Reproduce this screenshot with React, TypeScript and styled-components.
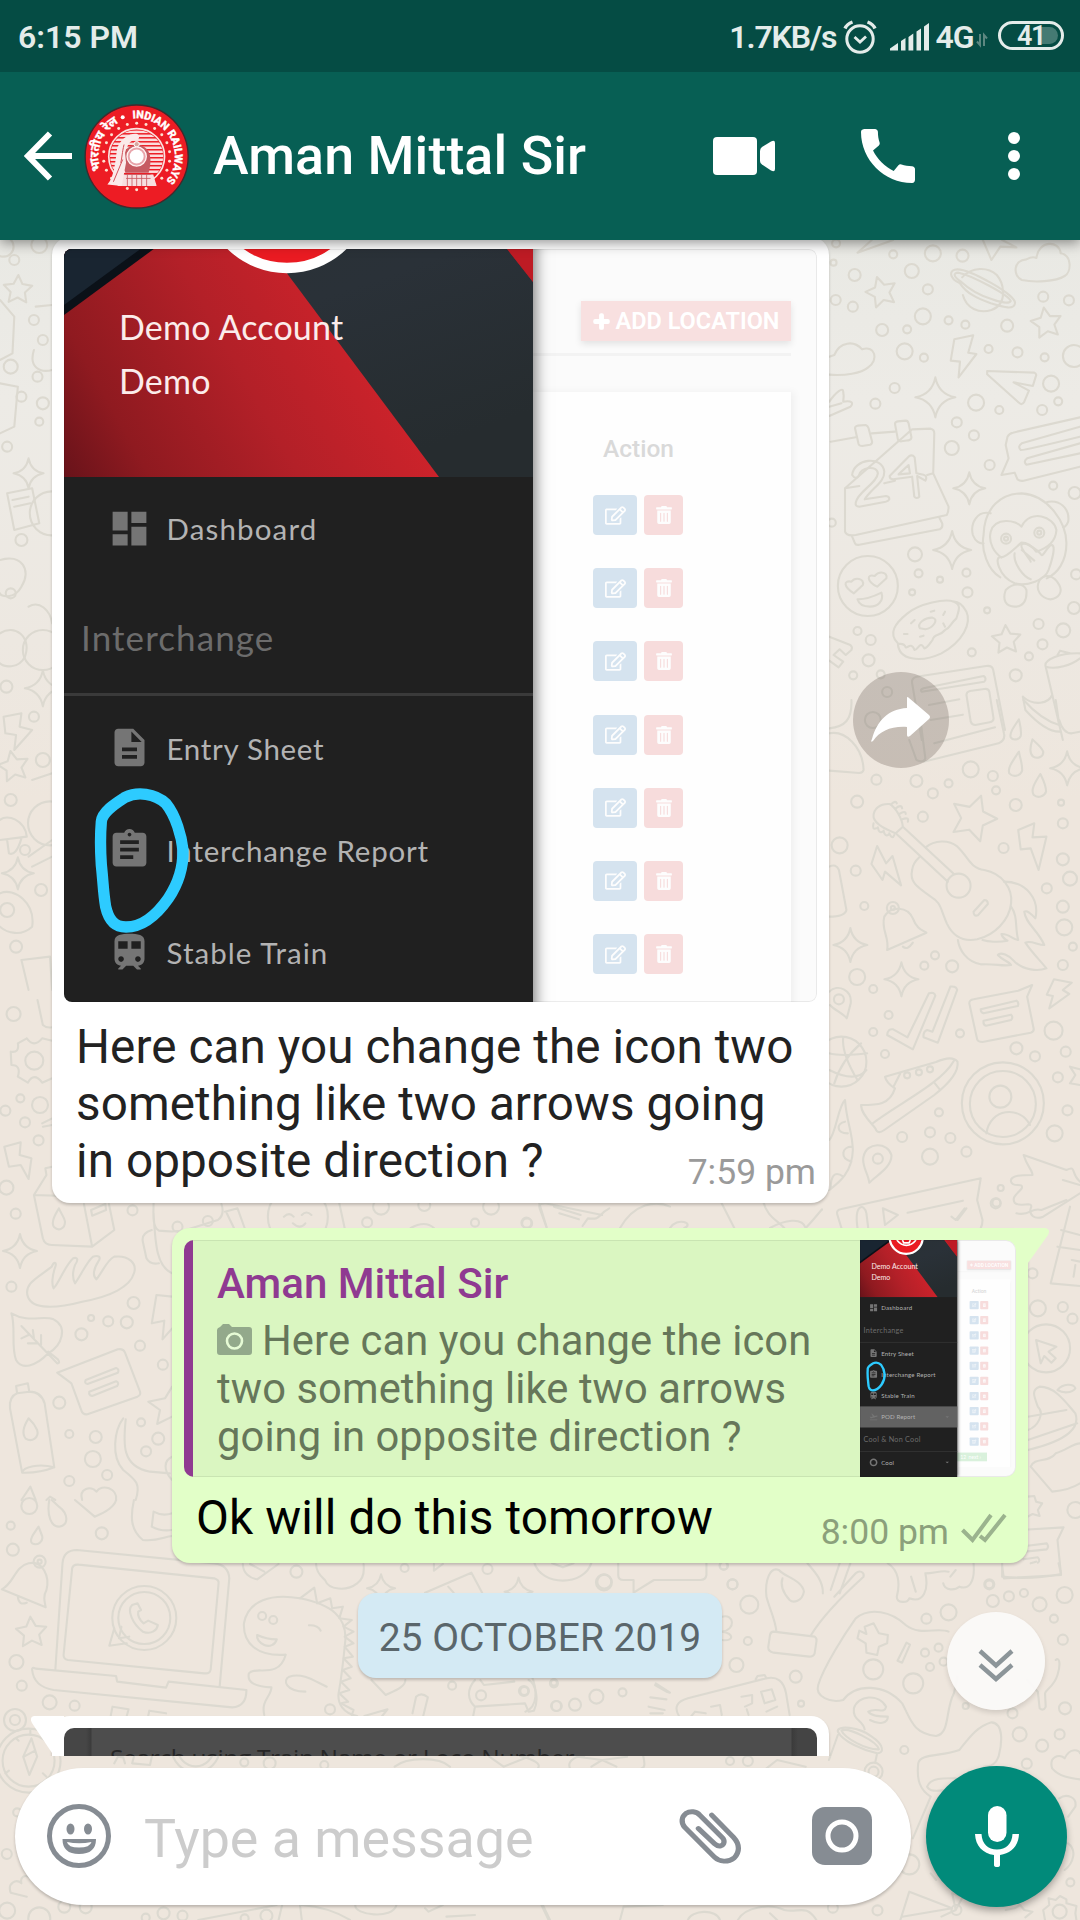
import React from "react";
import styled, { createGlobalStyle } from "styled-components";
import {
  MdArrowDropDown,
  MdAssignment,
  MdCall,
  MdDashboard,
  MdDescription,
  MdFlightTakeoff,
  MdTrain,
  MdTripOrigin,
} from "react-icons/md";
import { FaPlus, FaRegEdit, FaTrashAlt } from "react-icons/fa";

const GlobalStyle = createGlobalStyle`
  * { box-sizing: border-box; }
  body { margin: 0; background: #eee6dd; font-family: Roboto, "Liberation Sans", sans-serif; }
  svg { display: block; flex: none; }
`;

/* ---------- frame ---------- */

const Screen = styled.div`
  position: relative;
  display: flex;
  flex-direction: column;
  width: 1080px;
  height: 1920px;
  overflow: hidden;
  background: linear-gradient(#e9e9e4 240px, #edebe6 400px, #ede8e1 640px, #eee6dd 800px);
`;

const WallpaperLayer = styled.svg`
  position: absolute;
  left: 0;
  top: 0;
`;

const StatusBar = styled.div`
  position: relative;
  z-index: 3;
  flex: none;
  display: flex;
  align-items: center;
  height: 72px;
  padding: 1px 16px 0 18px;
  background: #054c44;
  color: #e4ecea;
  font-size: 32px;
  font-weight: 600;
`;

const StatusText = styled.span<{ $spacing?: number; $left?: number }>`
  margin-left: ${(p) => p.$left ?? 0}px;
  letter-spacing: ${(p) => p.$spacing ?? 0}px;
  white-space: nowrap;
`;

const StatusRight = styled.div`
  display: flex;
  align-items: center;
  margin-left: auto;
`;

const StatusGlyph = styled.svg<{ $left: number }>`
  margin-left: ${(p) => p.$left}px;
`;

const Battery = styled.div`
  display: flex;
  align-items: center;
  justify-content: center;
  position: relative;
  width: 66px;
  height: 29px;
  margin: -2px 0 0 10px;
  border: 3px solid #e4ecea;
  border-radius: 15px;
  font-size: 27px;
  letter-spacing: -1.5px;
`;

const BatteryLevel = styled.span`
  position: absolute;
  right: 3px;
  top: 3px;
  z-index: -1;
  width: 19px;
  height: 17px;
  border-radius: 0 9px 9px 0;
  background: #457a73;
`;

const AppBar = styled.header`
  position: relative;
  z-index: 2;
  flex: none;
  display: flex;
  align-items: center;
  height: 168px;
  padding-left: 24px;
  background: #075f54;
  color: #fff;
  box-shadow: 0 3px 12px rgba(0, 0, 0, 0.42);
`;

const ContactName = styled.h1`
  margin: 0 0 0 24px;
  width: 500px;
  font-size: 53.7px;
  font-weight: 500;
  letter-spacing: 0.1px;
  line-height: 62px;
  white-space: nowrap;
`;

const AvatarSvg = styled.svg`
  margin-left: 12px;
`;

const CallIcon = styled(MdCall)`
  margin-left: 76px;
`;

const DotsIcon = styled.svg`
  margin-left: 84px;
`;

/* ---------- conversation ---------- */

const Chat = styled.main`
  position: relative;
  flex: none;
  display: flex;
  flex-direction: column;
  height: 1516px;
  overflow: hidden;
`;

const Bubble = styled.section<{ $mine?: boolean; $top: number; $height: number }>`
  position: relative;
  flex: none;
  align-self: ${(p) => (p.$mine ? "flex-end" : "flex-start")};
  width: ${(p) => (p.$mine ? 856 : 777)}px;
  height: ${(p) => p.$height}px;
  margin: ${(p) => p.$top}px 52px 0;
  padding: 12px;
  border-radius: 18px;
  background: ${(p) => (p.$mine ? "#e2ffc8" : "#fff")};
  box-shadow: 0 2px 3px rgba(0, 0, 0, 0.2);
`;

const Tail = styled.svg<{ $mine?: boolean }>`
  position: absolute;
  top: 0;
  ${(p) => (p.$mine ? "right: -21px;" : "left: -21px;")}
`;

const Caption = styled.p`
  margin: 17px 0 0;
  padding-left: 12px;
  font-size: 47.6px;
  line-height: 57px;
  letter-spacing: 0.1px;
  color: #222;
  white-space: pre-line;
`;

const Stamp = styled.div`
  margin: -38px 1px 0 0;
  text-align: right;
  font-size: 35.5px;
  line-height: 40px;
  color: #9a9a9a;
`;

const Quote = styled.div`
  display: flex;
  height: 237px;
  overflow: hidden;
  border-radius: 10px;
  background: #daf6c1;
`;

const QuoteBar = styled.div`
  flex: none;
  width: 9px;
  background: #8f3a91;
`;

const QuoteBody = styled.div`
  flex: 1;
  padding: 18px 0 0 24px;
  border: solid #c9e4b2;
  border-width: 1px 0;
`;

const QuoteName = styled.div`
  font-size: 42.1px;
  line-height: 50px;
  font-weight: 500;
  color: #8f3a91;
`;

const QuoteText = styled.div`
  margin-top: 8px;
  font-size: 41.7px;
  line-height: 48px;
  color: #66775a;
  white-space: pre;
  letter-spacing: 0.1px;
`;

const InlineCamera = styled.svg`
  display: inline-block;
  margin-right: 9px;
`;

const ReplyRow = styled.div`
  display: flex;
  justify-content: space-between;
  padding: 13px 9px 0 12px;
`;

const ReplyText = styled.div`
  font-size: 47.8px;
  line-height: 57px;
  color: #000;
  letter-spacing: 0.1px;
`;

const ReplyMeta = styled.div`
  display: flex;
  gap: 12px;
  padding-top: 22px;
  font-size: 35.5px;
  line-height: 40px;
  color: #8ba07b;

  svg { margin-top: 1px; }
`;

const DatePill = styled.div`
  flex: none;
  align-self: center;
  width: 364px;
  height: 85px;
  margin-top: 30px;
  border-radius: 18px;
  background: #d4eaf4;
  color: #5a666b;
  font-size: 39px;
  line-height: 91px;
  text-align: center;
  white-space: nowrap;
  box-shadow: 0 2px 3px rgba(0, 0, 0, 0.2);
`;

const RoundButton = styled.button<{ $x: number; $y: number; $size: number; $bg: string; $raised?: boolean }>`
  position: absolute;
  left: ${(p) => p.$x}px;
  top: ${(p) => p.$y}px;
  display: flex;
  align-items: center;
  justify-content: center;
  width: ${(p) => p.$size}px;
  height: ${(p) => p.$size}px;
  padding: ${(p) => (p.$raised ? "8px 0 0" : "0")};
  border: none;
  border-radius: 50%;
  background: ${(p) => p.$bg};
  box-shadow: ${(p) => (p.$raised ? "0 3px 5px rgba(0,0,0,.12)" : "none")};
`;

const DarkPreview = styled.div`
  height: 90px;
  padding: 14px 0 0 46px;
  border-radius: 10px 10px 0 0;
  background: linear-gradient(
    90deg,
    #464646 0 22px,
    #3b3b3b 27px,
    #4d4d4d 28px 727px,
    #3b3b3b 728px,
    #444 734px
  );
  color: #262626;
  font: 24.500px/32px "Open Sans", sans-serif;
  letter-spacing: -0.35px;
`;

/* ---------- composer ---------- */

const Composer = styled.footer`
  position: relative;
  display: flex;
  align-items: center;
  gap: 15px;
  height: 164px;
  padding: 0 13px 4px 15px;
`;

const MessageBox = styled.div`
  display: flex;
  align-items: center;
  width: 896px;
  height: 137px;
  padding: 0 39px 0 31px;
  border-radius: 69px;
  background: #fff;
  box-shadow: 0 2px 3px rgba(0, 0, 0, 0.22);
`;

const Placeholder = styled.span`
  flex: 1;
  padding: 5px 0 0 32px;
  font-size: 53.8px;
  line-height: 64px;
  color: #ccc;
`;

const CameraGlyph = styled.svg`
  margin-left: 70px;
`;

const MicButton = styled.div`
  display: flex;
  align-items: center;
  justify-content: center;
  width: 141px;
  height: 141px;
  border-radius: 50%;
  background: #018a7a;
  box-shadow: 0 4px 7px rgba(0, 0, 0, 0.3);
`;

/* ---------- shared app capture ---------- */

const CaptureWindow = styled.div<{ $w: number; $h: number; $r: string }>`
  position: relative;
  flex: none;
  width: ${(p) => p.$w}px;
  height: ${(p) => p.$h}px;
  overflow: hidden;
  border-radius: ${(p) => p.$r};

  &::after {
    content: "";
    position: absolute;
    z-index: 3;
    inset: 0;
    border-radius: inherit;
    box-shadow: inset 0 0 0 1px rgba(0, 0, 0, 0.07);
  }
`;

const CapturePage = styled.div<{ $scale: number; $shift: number }>`
  position: relative;
  display: flex;
  width: 753px;
  height: 1144px;
  margin-top: ${(p) => p.$shift}px;
  transform: scale(${(p) => p.$scale});
  transform-origin: 0 0;
  background: #fbfbfb;
  font-family: Lato, "Open Sans", sans-serif;
`;

const Sidebar = styled.div`
  position: relative;
  z-index: 1;
  flex: none;
  display: flex;
  flex-direction: column;
  width: 468.5px;
  background: #202020;
  box-shadow: 2px 0 14px rgba(0, 0, 0, 0.55);
`;

const Cover = styled.div`
  position: relative;
  flex: none;
  height: 276px;
`;

const CoverArt = styled.svg`
  position: absolute;
  left: 0;
  top: 0;
`;

const CoverText = styled.div`
  position: relative;
  padding: 98.5px 0 0 55px;
  font-size: 34px;
  line-height: 54.5px;
  letter-spacing: 0.2px;
  color: #fbeceb;
`;

const MenuRow = styled.div<{ $active?: boolean; $ls?: number }>`
  flex: none;
  display: flex;
  align-items: center;
  height: 102.4px;
  padding: 0 28px 0 43px;
  gap: 14.5px;
  background: ${(p) => (p.$active ? "#626262" : "none")};
  color: #b3b3b3;
  font-size: 29.5px;
  letter-spacing: ${(p) => p.$ls ?? 0.5}px;

  svg { color: #757575; }
  span { flex: 1; padding-top: 1px; }
`;

const MenuHeading = styled.div`
  flex: none;
  height: 117px;
  padding-left: 17px;
  border-bottom: 3px solid #3a3a3a;
  font-size: 35px;
  line-height: 116px;
  letter-spacing: 1.1px;
  color: #6c6c6c;
`;

const Annotation = styled.svg`
  position: absolute;
  z-index: 2;
  left: -24px;
  top: 419px;
  overflow: visible;
`;

const Content = styled.div`
  flex: 1;
  padding: 100px 26px 0 0;
`;

const AddButton = styled.div`
  display: flex;
  align-items: center;
  justify-content: center;
  gap: 6px;
  width: 210px;
  height: 40px;
  margin-left: auto;
  background: #f8e0e0;
  color: #fff;
  font: 600 23.5px Roboto, sans-serif;
  white-space: nowrap;
  box-shadow: 0 3px 7px rgba(0, 0, 0, 0.1);

  svg { stroke: #fff; stroke-width: 50px; }
`;

const Rule = styled.div`
  height: 3px;
  margin-top: 12px;
  background: #f3f3f3;
`;

const Card = styled.div`
  height: 907px;
  margin-top: 36px;
  padding: 42px 0 0 60.5px;
  background: #fefefe;
  box-shadow: 3px 0 8px rgba(0, 0, 0, 0.05);
`;

const ColumnTitle = styled.div`
  height: 61px;
  padding-left: 10px;
  font: 500 24.5px/30px Roboto, sans-serif;
  color: #d9d9d9;
`;

const ActionRow = styled.div`
  display: flex;
  gap: 7px;
  height: 40px;
  margin-bottom: 33.2px;
`;

const ActionButton = styled.div<{ $danger?: boolean }>`
  display: flex;
  align-items: center;
  justify-content: center;
  width: ${(p) => (p.$danger ? 39 : 44)}px;
  border-radius: 4px;
  background: ${(p) => (p.$danger ? "#f7dcdc" : "#d5e3ef")};
  color: #fdfdfd;
`;

const Pager = styled.div`
  width: 145px;
  height: 42px;
  margin: 20px 0 0 -61px;
  padding-left: 16px;
  background: #d9f1dc;
  color: #fff;
  font-size: 24px;
  line-height: 42px;
`;

interface AppCaptureProps {
  scale?: number;
  shift?: number;
  rows: number;
}

function AppCapture({ scale = 1, shift = 0, rows }: AppCaptureProps) {
  const whole = rows > 7;
  return (
    <CapturePage $scale={scale} $shift={shift}>
      <Sidebar>
        <Cover>
          <CoverArt width="469" height="276" viewBox="0 -48 469 276">
            <defs>
              <linearGradient id="red" gradientUnits="userSpaceOnUse" x1="0" y1="228" x2="300" y2="60">
                <stop offset="0" stopColor="#68131a" />
                <stop offset="0.22" stopColor="#8f1a20" />
                <stop offset="0.6" stopColor="#b32028" />
                <stop offset="1" stopColor="#cf232b" />
              </linearGradient>
              <linearGradient id="slate" x1="0" y1="0" x2="0.6" y2="1">
                <stop offset="0" stopColor="#293135" />
                <stop offset="0.5" stopColor="#2a3138" />
                <stop offset="1" stopColor="#262c2f" />
              </linearGradient>
            </defs>
            <rect y="-48" width="469" height="276" fill="url(#slate)" />
            <path d="M0-48H169L375 228H0z" fill="url(#red)" />
            <path d="M0-48H155L0 66z" fill="#0b1118" />
            <path d="M0-48H142L0 56z" fill="#192531" />
            <path d="M407-48H469V33L443 0z" fill="#d42029" />
            <path d="M460-48H469V33L443 0L412-48z" fill="#a3171f" opacity=".45" />
            <circle cx="223" cy="-61" r="80" fill="#ea1b22" stroke="#fff" strokeWidth="10.5" />
            <path d="M178-48c12 16 28 26 46 26s34-10 46-26M205-48l6 14h26l6-14" stroke="#fff" strokeWidth="8" fill="none" />
          </CoverArt>
          <CoverText>
            Demo Account
            <br />
            Demo
          </CoverText>
        </Cover>
        <MenuRow $ls={1.15}><MdDashboard size={45} /><span>Dashboard</span></MenuRow>
        <MenuHeading>Interchange</MenuHeading>
        <MenuRow $ls={0.7}><MdDescription size={45} /><span>Entry Sheet</span></MenuRow>
        <MenuRow $ls={0.8}><MdAssignment size={45} /><span>Interchange Report</span></MenuRow>
        <MenuRow $ls={1.05}><MdTrain size={45} /><span>Stable Train</span></MenuRow>
        {whole && (
          <>
            <MenuRow $active><MdFlightTakeoff size={45} /><span>POD Report</span><MdArrowDropDown size={40} /></MenuRow>
            <MenuHeading>Cool &amp; Non Cool</MenuHeading>
            <MenuRow><MdTripOrigin size={45} /><span>Cool</span><MdArrowDropDown size={40} /></MenuRow>
          </>
        )}
      </Sidebar>
      <Content>
        <AddButton><FaPlus size={17} />ADD LOCATION</AddButton>
        <Rule />
        <Card>
          <ColumnTitle>Action</ColumnTitle>
          {Array.from({ length: rows }, (_, i) => (
            <ActionRow key={i}>
              <ActionButton><FaRegEdit size={21} /></ActionButton>
              <ActionButton $danger><FaTrashAlt size={18} /></ActionButton>
            </ActionRow>
          ))}
          {whole && <Pager>12&nbsp; next ›</Pager>}
        </Card>
      </Content>
      <Annotation width="520" height="400" viewBox="0 0 1560 1200">
        <path
          d="M184 605C186 575 230 548 255 532C292 514 345 520 378 551C408 588 425 650 429 690C430 745 412 795 385 835C350 885 305 921 258 921C220 921 205 895 197 860C190 820 189 780 184 735C181 690 181 640 184 605z"
          fill="none"
          stroke="#2dcbff"
          strokeWidth="34"
        />
      </Annotation>
    </CapturePage>
  );
}

/* ---------- wallpaper doodles ---------- */

type Spot = [number, number, number];

interface DoodleProps {
  x: number;
  y: number;
  rings?: Spot[];
  stars?: Spot[];
  sparks?: Spot[];
  paths?: string[];
}

const SX = 2.8;
const SY = 3;

function starPath([cx, cy, r]: Spot) {
  const tilt = ((cx * 7 + cy) % 40) / 60 - 0.3;
  const pts = Array.from({ length: 10 }, (_, i) => {
    const a = (Math.PI / 5) * i - Math.PI / 2 + tilt;
    const k = i % 2 ? r * 0.5 : r;
    return `${cx + Math.cos(a) * k * SX} ${cy + Math.sin(a) * k * SY}`;
  });
  return `M${pts.join("L")}z`;
}

function sparkPath([cx, cy, r]: Spot) {
  const w = r * SX;
  const h = r * SY;
  const a = w * 0.16;
  const b = h * 0.16;
  return `M${cx} ${cy - h}Q${cx + a} ${cy - b} ${cx + w} ${cy}Q${cx + a} ${cy + b} ${cx} ${cy + h}Q${cx - a} ${cy + b} ${cx - w} ${cy}Q${cx - a} ${cy - b} ${cx} ${cy - h}z`;
}

function Doodles({ x, y, rings = [], stars = [], sparks = [], paths = [] }: DoodleProps) {
  return (
    <g transform={`translate(${x} ${y}) scale(${1 / SX} ${1 / SY})`}>
      {rings.map(([cx, cy, r], i) => (
        <ellipse key={`r${i}`} cx={cx} cy={cy} rx={r * SX} ry={r * SY} vectorEffect="non-scaling-stroke" />
      ))}
      {[...stars.map(starPath), ...sparks.map(sparkPath), ...paths].map((d, i) => (
        <path key={`p${i}`} d={d} vectorEffect="non-scaling-stroke" />
      ))}
    </g>
  );
}

function Wallpaper() {
  return (
    <WallpaperLayer width="1080" height="1920" viewBox="0 0 1080 1920" fill="none" stroke="#dcd9d0" strokeWidth="2.1" strokeLinejoin="round" strokeLinecap="round">
      <Doodles
        x={520}
        y={240}
        rings={[
          [885, 10, 4], [1045, 43, 4], [1156, 40, 8], [1239, 47, 6], [878, 68, 3], [937, 105, 6], [1097, 93, 7],
          [1142, 148, 5], [884, 180, 5], [932, 200, 5], [1128, 229, 8], [1200, 241, 4], [1247, 254, 4], [1465, 170, 5],
          [1537, 181, 5], [1364, 257, 6], [1014, 270, 6], [1084, 268, 4], [1077, 334, 8], [1131, 353, 4], [1312, 327, 4],
          [1393, 337, 5], [1469, 352, 4], [1551, 348, 11], [1487, 431, 8], [1049, 444, 5], [995, 491, 5], [1277, 488, 8],
          [1342, 510, 4], [1462, 510, 5], [1507, 484, 4], [1223, 547, 5], [1271, 586, 5], [1209, 624, 7], [1315, 675, 5],
          [1493, 737, 4], [1553, 759, 6], [873, 848, 4], [1106, 943, 7], [1116, 1000, 4], [1176, 1019, 3], [1250, 998, 4],
          [1253, 1057, 5], [1098, 1057, 3], [1308, 1111, 3], [1551, 1104, 6], [1557, 1003, 5], [945, 1173, 4],
          [982, 1200, 5], [1452, 1152, 5], [1521, 1171, 7], [1463, 1213, 5], [1265, 1237, 4], [1425, 1249, 4],
          [976, 1261, 6], [933, 1306, 4], [1010, 1303, 4], [1388, 1306, 6], [1028, 1356, 5],
          [974, 1038, 30], [1361, 896, 5], [1454, 878, 5], [1361, 896, 2], [1454, 878, 2],
        ]}
        stars={[[1012, 157, 16], [1474, 250, 16], [1362, 1200, 15]]}
        sparks={[[1163, 472, 20], [1258, 745, 16], [1210, 930, 19]]}
        paths={[
          "M945 38L985 0M945 38L1045 0M1296 0L1320 60L1345 20L1390 22L1350 0",
          "M1240 165C1250 205 1285 222 1320 210C1345 200 1355 180 1352 150M1238 112C1265 80 1310 80 1335 105C1345 118 1352 135 1352 152",
          "M1232 130C1200 115 1200 88 1225 88C1260 88 1390 165 1386 190C1382 212 1350 200 1318 190C1280 175 1250 160 1232 130zM1235 125C1215 112 1210 98 1228 98C1262 105 1370 165 1374 183C1370 192 1345 187 1320 177C1285 165 1255 145 1235 125z",
          "M1405 120C1380 108 1380 60 1418 58C1428 52 1438 50 1446 54C1452 0 1510 0 1514 40C1545 45 1545 95 1525 108C1500 125 1440 128 1405 120z",
          "M866 404C910 408 955 400 975 382C1005 360 995 315 958 328C935 300 895 305 880 345L866 350",
          "M1216 298L1269 286L1255 338L1278 342L1228 412L1232 365L1206 362z",
          "M1308 393L1440 398Q1448 402 1444 410L1436 438L1382 427L1425 452L1412 485Q1405 498 1397 488L1308 403z",
          "M866 485C885 455 905 440 905 455C908 470 905 480 905 485C930 480 935 490 925 500L866 528M866 500L900 490",
          "M870 605L940 592M985 580L1050 575M1098 568L1150 566Q1160 568 1160 580L1157 700L1200 800Q1200 815 1195 825L940 885Q915 890 910 875L910 745zM910 745L950 738M1020 730L1050 722M1140 705L1157 700M930 890L938 910Q940 916 950 914L1175 868Q1185 862 1182 850L1175 835",
          "M938 565Q938 558 945 557L968 555Q974 557 976 565L986 605Q986 612 980 614L958 618Q950 618 948 612zM1050 552Q1050 545 1058 544L1080 542Q1086 542 1088 550L1096 592Q1096 600 1088 601L1068 604Q1060 604 1058 598z",
          "M930 705C935 655 1015 645 1020 695C1022 725 985 745 965 778L1025 768Q1035 770 1034 778Q1032 783 1024 785L950 800Q938 800 940 788C945 755 1000 730 1002 700C1000 675 955 680 948 708Q940 720 930 705z",
          "M1088 650L1035 708Q1035 718 1045 718L1098 710L1104 770Q1110 778 1118 770L1112 708L1135 722Q1142 708 1130 704L1110 700L1105 652Q1098 642 1088 650zM1088 675L1092 700L1060 703z",
          "M1365 590Q1370 580 1380 578L1568 532M1365 590L1360 615L1368 655L1348 705L1385 698L1393 718Q1400 724 1410 722L1568 680M1568 560L1405 610Q1392 620 1402 630Q1408 632 1568 590M1568 610L1420 655Q1408 665 1418 674L1568 640",
          "M1345 1012C1310 990 1290 930 1298 885C1300 800 1350 760 1405 760C1480 765 1530 850 1530 910C1530 965 1505 1000 1475 1015M1318 820C1280 810 1260 850 1268 885C1275 905 1288 912 1298 910M1470 788C1510 775 1540 805 1535 845C1530 860 1520 865 1520 860",
          "M1404 860C1390 840 1330 830 1318 875C1310 910 1330 940 1348 952C1365 950 1380 930 1404 908C1420 908 1435 920 1445 935C1475 925 1500 905 1502 870C1495 830 1430 805 1404 860z",
          "M1348 952C1325 945 1340 1010 1385 1030C1420 1040 1470 1020 1480 990C1490 960 1500 920 1490 915C1480 912 1465 950 1460 945C1450 930 1410 900 1404 915C1400 925 1430 960 1430 965M1385 940C1380 970 1410 1010 1430 1018M1405 930L1440 962",
          "M1360 1050C1350 1080 1360 1100 1385 1100C1410 1100 1420 1080 1418 1050C1410 1028 1380 1028 1360 1050zM1455 1020C1440 1050 1460 1075 1485 1078C1510 1075 1520 1055 1510 1035C1495 1005 1470 1000 1455 1020z",
          "M935 1060C905 1040 905 1020 928 1025C938 1010 965 1015 960 1035zM1000 1040C970 1025 970 1000 993 1008C1005 992 1030 995 1026 1015zM945 1078C970 1078 990 1070 1012 1058C1020 1085 1000 1100 980 1100C960 1100 948 1090 945 1078z",
          "M1058 1210C1030 1180 1050 1150 1085 1120C1120 1090 1190 1075 1215 1085C1240 1095 1225 1120 1222 1135C1205 1150 1205 1165 1190 1170C1175 1190 1160 1180 1155 1200C1145 1215 1140 1225 1132 1225C1120 1200 1115 1230 1105 1230C1095 1205 1085 1225 1080 1222C1075 1205 1060 1215 1058 1210zM1058 1210C1060 1260 1120 1270 1180 1240C1240 1205 1265 1150 1250 1115C1240 1095 1230 1085 1215 1085",
          "M1120 1165C1110 1150 1135 1132 1155 1133C1175 1138 1155 1165 1135 1168zM1095 1150L1105 1140M1150 1115L1160 1112M1190 1115L1185 1125M1185 1150L1190 1160M1075 1182L1085 1182M1120 1190L1130 1187",
          "M866 1190L925 1215Q932 1222 928 1230L912 1245L895 1228L878 1245L905 1265L892 1282L866 1262",
          "M1098 1330Q1095 1315 1110 1310L1305 1278Q1322 1275 1325 1290L1358 1470M1098 1330L1125 1500M1125 1355L1300 1325Q1308 1315 1298 1308L1130 1345Q1118 1350 1125 1355zM1145 1395L1230 1378M1150 1440L1240 1424M1250 1365Q1250 1355 1260 1353L1300 1347Q1312 1345 1314 1355L1326 1435Q1326 1445 1315 1447L1275 1455Q1265 1455 1262 1445z",
          "M1408 1370C1440 1400 1480 1390 1490 1365M1408 1370L1415 1410Q1470 1475 1510 1475M1472 1280L1520 1500M1472 1280C1465 1260 1510 1238 1568 1240M1472 1280C1500 1290 1545 1275 1568 1255M1505 1245L1512 1232L1540 1240",
        ]}
      />
      <Doodles
        x={520}
        y={700}
        rings={[
          [998, 239, 5], [1110, 243, 6], [1200, 250, 4], [1156, 280, 5], [1262, 208, 8], [1324, 228, 5], [1333, 271, 4],
          [944, 305, 6], [1128, 350, 5], [1388, 315, 6], [1515, 308, 3], [1520, 370, 5], [895, 436, 8], [1354, 444, 5],
          [1520, 478, 6], [940, 512, 5], [1540, 536, 7], [1475, 565, 5], [1520, 620, 6], [964, 618, 4], [1524, 682, 8],
          [1548, 740, 4], [1162, 766, 4], [1132, 797, 4], [1210, 799, 6], [1520, 795, 5], [944, 831, 8], [989, 867, 4],
          [1032, 945, 4], [989, 996, 4], [1232, 1000, 4], [1494, 992, 9], [1390, 1045, 6], [1442, 1069, 5],
          [1528, 1055, 5], [1022, 1062, 4], [1506, 1132, 5], [1173, 1237, 4], [1533, 1231, 5], [1148, 1297, 5],
          [1070, 1311, 5], [1205, 1314, 5], [1250, 1355, 5], [1148, 1370, 8], [1497, 1300, 8], [1346, 1464, 3],
          [1334, 1508, 4], [893, 898, 5], [1002, 1376, 5], [1352, 1210, 41], [1352, 1212, 33], [1345, 1190, 11],
          [1228, 557, 12], [1044, 624, 6], [1044, 624, 2], [1084, 1126, 3], [1117, 1117, 3], [1148, 1108, 3],
          [900, 1085, 25], [988, 60, 8],
        ]}
        stars={[[1269, 355, 24]]}
        sparks={[[925, 735, 17], [1068, 838, 17], [1532, 205, 17]]}
        paths={[
          "M1397 58C1380 85 1370 100 1374 112C1380 122 1398 120 1402 108C1405 90 1400 75 1397 58zM1397 155C1375 190 1365 205 1370 220C1380 232 1400 230 1406 212C1407 190 1400 175 1397 155zM1435 118C1428 140 1425 160 1437 170C1450 178 1466 170 1465 155C1460 140 1445 130 1435 118zM1457 222C1440 250 1430 270 1438 284C1450 296 1468 290 1473 275C1473 255 1465 240 1457 222z",
          "M866 100C910 90 960 140 962 210Q960 218 950 219L866 212M866 85C910 80 930 60 928 0M866 500Q885 490 893 510L914 630Q910 650 866 650",
          "M1160 130L1330 82M1130 185L1340 130Q1360 120 1355 100L1335 0M1090 120L1110 180Q1130 190 1135 175L1120 50M1410 0Q1460 60 1510 75L1500 0M1510 60Q1520 100 1545 100L1568 95",
          "M990 352C988 325 1010 310 1035 312C1050 320 1070 355 1072 380L1052 400C1030 390 995 375 990 352zM1072 380L1215 522M1052 400L1198 545",
          "M1040 312Q1052 300 1055 310M1052 325Q1068 312 1070 325M1062 342Q1080 330 1080 342M1070 358Q1090 350 1086 365M990 370Q985 390 998 385M1002 382Q1005 402 1016 395M1018 392Q1022 412 1032 404M1034 400Q1042 420 1048 405",
          "M1136 442C1160 420 1200 418 1225 440C1255 470 1260 505 1300 510C1350 520 1380 565 1375 610C1370 660 1330 705 1280 718C1245 725 1215 715 1195 670C1175 620 1180 610 1150 590C1110 560 1090 545 1098 510C1100 490 1110 480 1118 472",
          "M1270 635L1300 600Q1310 600 1310 612L1282 646Q1270 650 1270 635zM1355 545C1420 545 1455 600 1443 655C1430 640 1420 630 1412 635C1415 670 1450 690 1468 735C1450 735 1430 720 1415 728C1435 760 1455 780 1474 805C1450 815 1410 810 1385 785C1370 765 1345 755 1338 765C1350 780 1370 785 1375 795C1350 800 1330 790 1290 793C1250 785 1230 750 1226 720M1375 620C1395 650 1385 680 1395 720C1380 720 1370 700 1348 702C1350 715 1360 718 1365 722C1340 728 1310 725 1295 720",
          "M1000 438L1025 490L1043 468L1067 556L1022 515L1015 540L984 492zM1395 390L1440 370L1435 412L1474 410L1452 510L1430 445L1402 448zM1495 838L1545 848L1520 870L1538 882L1482 925L1492 888L1475 884z",
          "M1028 750C1035 710 1010 690 1020 650C1040 615 1085 620 1100 655C1110 685 1125 690 1138 698zM1072 740Q1085 752 1100 728",
          "M866 875C890 850 930 870 926 910L915 955C905 940 880 930 868 915M865 1060Q900 1070 972 1060M880 1150Q900 1080 955 1030M866 1110Q940 1150 970 1110M905 1012Q900 1060 945 1140",
          "M1145 880Q1160 875 1163 887L1100 1048L1028 1005Q1030 985 1045 988L1085 1012zM1205 860Q1222 858 1224 870L1170 1028L1130 1012Q1128 995 1140 990L1155 995zM1258 910Q1258 900 1270 898L1395 872L1434 855L1420 890L1438 985Q1440 995 1430 998L1295 1026Q1282 1026 1280 1018zM1290 928L1390 902Q1398 908 1394 918L1298 940Q1290 938 1290 928zM1298 962L1375 944Q1382 952 1375 960L1305 977Q1296 975 1298 962z",
          "M1022 1130L1165 1086Q1210 1065 1225 1085C1230 1120 1190 1160 1160 1185L1020 1290Q1000 1305 995 1285C980 1265 955 1240 955 1215C1000 1215 1035 1215 1050 1165C1035 1155 1025 1145 1022 1130zM985 1272C1060 1210 1180 1150 1215 1082M1045 1162L1065 1120M1160 1148L1175 1168",
          "M1306 1300C1315 1225 1400 1215 1428 1275M978 1448C975 1420 955 1395 962 1370C970 1325 1030 1325 1040 1365C1042 1400 1000 1425 978 1448z",
          "M910 1200C915 1270 930 1290 932 1350C930 1420 890 1450 866 1470M910 1200C890 1220 885 1300 866 1320M910 1265C885 1270 885 1300 918 1300M930 1340C900 1340 895 1375 928 1385M905 1430C880 1410 870 1430 870 1465",
          "M1568 1445C1540 1420 1560 1395 1530 1410L1410 1365C1420 1400 1435 1410 1435 1425C1410 1425 1370 1425 1375 1445C1380 1465 1410 1445 1405 1465C1395 1480 1375 1490 1385 1508C1400 1525 1440 1500 1430 1525C1425 1545 1440 1560 1465 1550L1568 1480M1520 1440L1568 1455",
          "M1540 1100L1568 1108M1540 1100L1555 1125L1540 1150L1568 1155",
        ]}
      />
      <Doodles
        x={520}
        y={1200}
        rings={[
          [20, 70, 5], [1332, 10, 5], [1435, 220, 5], [1450, 325, 8], [1520, 321, 5], [1547, 356, 5], [1473, 445, 24],
          [1555, 930, 8], [570, 1097, 4], [595, 1153, 5], [236, 1145, 7], [1314, 1153, 4],
        ]}
        paths={[
          "M55 25Q50 10 70 10L230 45M55 25L75 84M95 20L170 45M110 40L165 58M250 25C215 45 230 60 190 55L175 78",
          "M280 84C320 10 380 0 420 20M420 84C440 50 490 70 460 84M700 84C740 60 790 50 800 84M560 0L600 84M680 0C690 50 720 60 740 84M800 84C830 50 850 20 845 30",
          "M888 42Q885 30 900 27L1290 -65L1280 0L1295 60Q1295 75 1290 84M888 42L900 84M945 84C935 10 965 10 970 40L975 84M1016 25L1058 45L1022 75zM1085 38L1240 2M1208 50L1220 60L1245 25M1225 60L1250 25",
          "M1390 40C1430 50 1430 20 1460 30L1530 0M1540 20L1525 84L1486 250L1568 258M1515 90L1568 105M1505 140L1568 150M1545 180L1568 185M1550 230L1555 195",
          "M1445 420L1502 440L1480 455L1500 475L1488 488L1468 468L1458 490zM1505 570C1520 550 1550 550 1555 565C1545 580 1520 580 1505 570z",
          "M1422 690C1450 680 1470 640 1450 620C1440 590 1430 570 1455 560C1500 560 1530 610 1555 640C1568 680 1540 720 1422 750M1422 650L1530 630M1422 720L1560 670M1430 800C1440 770 1480 790 1500 760C1530 750 1550 730 1568 730M1430 800L1490 875Q1540 870 1568 850",
          "M1422 890L1440 888L1445 905L1462 910L1450 930L1455 948L1435 942L1422 950M1400 990L1522 982L1505 1020L1515 1125L1355 1135L1350 1100M1415 1038L1475 1030Q1482 1040 1475 1048L1415 1055M1410 1078L1450 1072Q1458 1082 1450 1088",
          "M40 1088C60 1160 180 1160 200 1088M90 1090L120 1102L150 1090M275 1088L275 1125Q275 1140 290 1140L318 1140L318 1178L375 1140L505 1140Q520 1140 522 1125L522 1088",
        ]}
      />
      <Doodles
        x={0}
        y={1000}
        rings={[
          [38, 42, 7], [96, 182, 9], [57, 295, 4], [112, 315, 8], [15, 332, 5], [70, 367, 5], [108, 421, 5],
          [18, 563, 7], [44, 641, 5], [371, 631, 5], [497, 680, 5], [582, 663, 5], [1028, 667, 5], [1067, 620, 8],
          [1188, 615, 6], [1375, 620, 8], [1330, 668, 4], [1474, 668, 5], [32, 860, 5], [374, 909, 6], [255, 954, 3],
          [303, 964, 5], [355, 967, 6], [228, 1003, 6], [392, 1037, 5], [456, 1094, 5], [166, 1208, 6], [194, 1302, 4],
          [268, 1311, 6], [395, 1267, 4], [443, 1316, 6], [409, 1354, 5], [260, 1377, 8], [300, 1425, 5], [194, 1443, 5],
          [834, 650, 30],
        ]}
        sparks={[[56, 753, 17]]}
        paths={[
          "M105 0L120 75Q130 85 146 82M75 115Q95 145 118 115L146 122M75 115L50 130Q55 160 30 155L32 195Q60 195 50 230L78 248Q95 215 118 248L146 235",
          "M12 440L58 427L55 465L88 475L80 537L58 495L25 500zM118 370L146 355M120 380L146 375M127 505L146 500M127 505L130 525L95 585L120 715Q125 735 145 735L258 740L320 690L305 612M95 585L235 590M235 612L258 740M165 625C150 650 142 670 152 682C165 695 182 685 182 665C180 650 170 640 165 625zM255 630L295 612L297 630L258 647z",
          "M430 610C430 640 425 680 445 692C470 695 500 695 520 690L610 660Q630 645 620 612M425 690Q395 700 400 725L410 775Q420 795 445 790M430 640C435 740 440 800 482 820M630 635L665 625L685 684M635 640L655 684M795 650Q810 635 822 650M845 645Q858 630 872 645M820 670Q840 690 855 670M950 610L965 684M1150 684Q1190 660 1215 684M1510 610L1530 680",
          "M78 890C65 850 110 830 145 800C150 785 160 785 155 800C145 830 145 855 150 865C165 850 180 800 205 775C218 770 220 780 210 795C200 825 205 840 210 850C230 820 240 790 260 770C275 765 285 770 275 785C260 810 260 830 270 838C290 810 300 780 320 770C360 765 385 790 375 820C365 860 310 890 230 905C160 925 90 930 78 890z",
          "M32 940C80 970 120 945 150 958C190 980 175 1035 135 1060C100 1100 60 1110 45 1080C30 1040 45 980 32 940zM60 978L160 1090Q170 1090 162 1078L135 1055M95 1015L92 990M80 1005L60 1015M115 1035L115 1005M105 1030L78 1030",
          "M160 1118L330 1048Q345 1045 350 1058L392 1175Q395 1185 385 1190L245 1243Q232 1245 228 1232L200 1150zM240 1140L325 1104Q335 1108 330 1118L245 1152Q235 1150 240 1140zM250 1175L325 1144Q335 1148 328 1158L258 1188Q248 1186 250 1175z",
          "M48 1180L45 1158L78 1150L82 1175M48 1180Q25 1190 28 1225L62 1418Q110 1420 152 1402L125 1210Q115 1175 82 1175zM62 1418C65 1400 110 1390 152 1402M80 1255C68 1275 60 1300 72 1316C90 1328 110 1312 104 1290C98 1275 90 1265 80 1255z",
          "M482 890L438 885L425 970L460 962L455 1018L482 985M482 1160L462 1195L415 1205L448 1230L440 1272L482 1250M345 1255C320 1290 310 1370 345 1410C380 1440 395 1450 380 1500M352 1258C345 1330 340 1400 420 1415L475 1420M482 1370C460 1380 455 1410 482 1440",
          "M60 1500L85 1460L100 1500M130 1500L140 1490L155 1500M230 1500C220 1465 255 1455 270 1475C285 1450 330 1465 325 1500",
        ]}
      />
      <Doodles
        x={0}
        y={1500}
        rings={[
          [82, 18, 8], [30, 77, 4], [285, 100, 6], [36, 149, 6], [111, 185, 6], [111, 185, 2], [830, 215, 6],
          [46, 486, 7], [61, 557, 5], [139, 607, 7], [209, 617, 5], [924, 628, 5], [1133, 204, 4], [1365, 207, 5],
          [1266, 557, 4], [1347, 586, 5], [1467, 573, 5], [1551, 548, 3], [1557, 618, 5], [734, 348, 4], [765, 360, 4],
          [404, 354, 32], [404, 354, 26], [42, 660, 11], [42, 660, 5], [80, 782, 32], [80, 782, 26], [684, 787, 4],
          [908, 795, 4], [755, 790, 6], [19, 1062, 5], [48, 937, 4], [180, 1220, 6], [240, 1222, 6], [408, 1253, 4],
          [458, 1240, 6], [511, 1247, 5], [685, 1255, 4], [746, 1247, 6], [20, 1232, 8], [110, 1255, 11],
          [548, 745, 24], [548, 745, 18],
        ]}
        stars={[[88, 398, 16]]}
        sparks={[[1067, 265, 14], [1452, 275, 14]]}
        paths={[
          "M138 0C130 50 145 80 165 80C195 75 190 40 165 20L145 0M108 80C95 100 80 120 90 130C105 138 122 125 118 108zM210 0L265 50C300 35 320 20 325 0",
          "M375 0C365 50 365 90 400 120C440 125 460 110 482 108M425 80L430 35Q455 50 482 40M425 80Q450 95 482 90",
          "M5 268C40 250 40 200 80 190C120 180 140 230 130 270C120 290 125 305 128 322zM50 290Q52 318 75 308",
          "M155 508L175 190Q178 150 215 150L600 190Q640 195 642 235L615 560M178 465L202 205Q205 192 220 194L600 235Q614 240 612 250L590 508Q588 522 572 520L190 480Q178 478 178 465zM90 510Q88 500 100 506L325 528L328 545L465 563L472 545L690 570Q690 620 650 622L150 570Q95 560 90 510z",
          "M320 385L306 437L355 430M340 380L333 415L362 410M370 315C355 330 370 370 400 395C425 405 440 390 442 375L415 362L402 370C390 360 385 345 387 335L395 330L385 310z",
          "M740 645C730 600 760 590 760 562C720 560 690 550 697 520C715 495 780 540 800 464C720 470 680 430 683 370C695 300 760 280 840 295C930 315 970 350 967 420C960 500 955 540 948 580C945 610 960 640 1000 648",
          "M720 405C740 415 755 418 775 418C770 435 755 442 740 435C725 428 718 415 720 405zM865 376Q890 375 898 392M855 575C800 575 790 540 810 530C850 515 890 550 915 560M840 295L880 263L888 310L925 295L930 325L960 320L950 355L985 360L962 380L990 395L965 410L990 430L965 440L988 470L962 475L985 500L960 510L982 535L955 545L978 570L950 580L975 605L955 610L990 630L985 645M1020 648L1085 628L1070 648",
          "M680 192C680 220 700 235 720 238L780 192M700 192L740 215M885 192C885 220 905 235 910 240C920 270 970 275 1000 250C1020 235 1020 210 1018 192M1215 192V212L1240 192M1190 278L1320 218L1350 278M1255 260L1270 278",
          "M1040 540L1080 585C1110 570 1135 560 1135 540M1330 540C1305 570 1310 600 1330 620L1325 648M1330 620L1470 610L1480 635L1495 632C1510 600 1500 550 1480 540M1345 540L1355 555L1440 545M1155 640L1165 590Q1180 575 1198 592L1185 648",
          "M310 648L315 620L360 628L355 648M415 648L418 632L465 640M320 790L330 770L345 772L350 790M375 770L370 790L420 795L425 770M88 715L65 770L82 825L104 770zM67 770L98 752M1105 800C1140 770 1230 770 1260 800M1370 770L1410 800L1480 770M15 820L25 812M85 692V705M45 715L52 722M120 820L130 830",
          "M75 1190L30 1178C20 1150 45 1135 60 1150C55 1130 70 1125 80 1130M555 1260L775 1215M790 1215L780 1260M840 1215L845 1260M845 1215C900 1220 950 1240 980 1260M995 1215C990 1245 1100 1260 1110 1215M1190 1225L1200 1235L1240 1215M1250 1250L1330 1245M1520 1215L1540 1260",
        ]}
      />
      <Doodles
        x={520}
        y={1560}
        rings={[
          [235, 67, 8], [571, 17, 4], [595, 73, 5], [642, 134, 9], [638, 243, 4], [606, 315, 7], [772, 350, 6],
          [787, 431, 3], [214, 410, 7], [154, 434, 6], [103, 438, 5], [287, 397, 4], [95, 370, 4], [12, 393, 4],
          [1314, 73, 5], [1324, 123, 6], [1369, 109, 5], [1411, 99, 4], [1455, 133, 7], [1525, 105, 8], [1200, 157, 8],
          [1138, 176, 5], [1495, 176, 4], [1520, 239, 5], [1526, 445, 6], [1379, 460, 5], [1399, 523, 7], [1462, 557, 6],
          [1511, 523, 5], [1076, 570, 4], [1248, 438, 3], [1419, 611, 5], [989, 328, 10], [1101, 370, 10],
          [1134, 278, 4], [1172, 263, 4], [1148, 321, 4], [1186, 305, 4], [588, 603, 4], [638, 603, 5], [990, 635, 9],
          [990, 635, 5], [1090, 913, 10], [1541, 967, 4], [1001, 1051, 5], [876, 1043, 5], [1511, 1055, 7],
          [1222, 1050, 5],
        ]}
        paths={[
          "M690 110C685 60 700 20 725 30C740 50 790 60 795 95C790 125 765 130 755 120C730 90 730 70 735 55M690 110C700 150 715 180 718 215M815 225C840 180 880 130 962 50C965 35 950 30 940 40L880 110M848 100C850 60 820 30 805 10M870 90L895 10M895 100L925 10M710 215L825 230Q832 235 830 245L825 280Q822 290 810 290L710 278Q695 275 695 262L700 225Q702 215 710 215z",
          "M1030 10C1060 30 1065 70 1055 110C1055 130 1085 130 1090 115C1130 130 1145 90 1135 40C1160 40 1180 30 1200 35M1095 50L1108 95M1185 70C1190 95 1220 90 1230 80C1255 90 1275 70 1270 10M1205 50L1220 30M1350 10L1350 50Q1430 60 1515 42L1508 10M1430 10L1445 5",
          "M835 375C850 320 910 220 940 175C980 140 1040 155 1080 195C1120 230 1170 200 1200 215M835 375C825 410 870 430 905 420C940 370 1020 370 1070 430C1095 480 1100 520 1165 528C1205 520 1190 450 1215 400L1225 350",
          "M965 200L990 190L1005 220L1030 225L1028 250L1005 260L1000 285L970 278L968 250L945 235L950 212L970 222zM1082 248L1092 254L1070 308L1057 302z",
          "M445 468C430 440 440 425 470 415L690 355Q735 345 745 400L755 465M660 358L665 348L685 345L690 355M480 468L490 455L520 460M535 440L560 435L565 465M620 410L650 405L650 430L630 440M640 465L635 448M675 395L705 388L715 420L685 430zM690 455L720 440",
          "M380 370L420 398L410 395L378 375M365 412L410 418M360 440L405 450M365 460L400 460M566 170C600 160 605 210 566 215C600 220 600 245 566 240M30 340C50 390 50 440 15 455",
          "M965 508C960 480 930 480 935 445C945 405 1005 400 1025 440C1020 465 1000 440 975 455C985 470 1010 470 1030 470C1030 490 1005 495 980 480M890 515C885 495 950 500 985 530C1020 555 1020 580 1000 580C960 570 905 545 890 515zM900 512C920 500 1000 545 1005 568C970 570 910 535 900 512zM890 525L865 600M1000 580L995 605",
          "M1115 610C1120 580 1180 590 1230 570C1260 530 1280 500 1320 487C1355 490 1350 550 1340 590C1330 620 1310 620 1300 620M1115 610C1110 660 1120 690 1150 710L1100 835M1140 680C1150 650 1200 655 1220 655M1140 680C1150 700 1180 690 1200 690",
          "M1500 300C1510 290 1515 310 1505 345C1495 380 1475 385 1470 400L1472 440Q1465 455 1455 445L1450 395C1440 385 1430 370 1420 360M1490 625C1480 590 1510 580 1525 595C1540 560 1568 570 1568 580M1490 625C1510 650 1540 655 1568 658M1510 715C1530 700 1560 710 1555 740L1535 770M1535 850C1560 870 1550 910 1525 930",
          "M1065 1080L1090 995L1210 1045M1210 1045L1070 1070M1220 1050L1180 1070M1220 1050L1210 1000L1240 1010zM1150 940L1165 960M280 1080L290 1040L400 1035M60 1035L80 1080M470 1080C480 1050 550 1045 560 1080M610 1080C630 1040 700 1030 740 1050C780 1060 800 1030 830 1080M700 1060L720 1080",
          "M1480 1015L1500 1020L1512 1008L1530 1018L1530 1030L1558 1038L1555 1060L1558 1080M1480 1015L1482 1035L1465 1050L1470 1080M1360 1050L1385 1045L1400 1035L1412 1050L1435 1055L1415 1072",
          "M0 588C40 600 60 610 50 625M140 625C130 600 160 588 180 588M230 600L160 590M230 600L200 620M230 600L270 620M230 600L300 590M345 588C350 610 350 625 340 625M690 625L720 600L800 620",
        ]}
      />
      <Doodles
        x={0}
        y={240}
        rings={[
          [10, 20, 10], [40, 60, 5], [110, 15, 8], [95, 240, 5], [120, 300, 5], [105, 410, 5], [30, 380, 7],
          [60, 470, 5], [110, 545, 4], [120, 490, 6], [20, 620, 5], [60, 900, 6], [120, 1230, 20], [30, 1060, 5],
          [18, 1340, 6], [95, 1430, 5], [120, 1560, 7], [30, 1680, 6], [70, 1830, 5], [20, 2010, 7], [115, 1950, 6],
          [45, 2120, 6], [145, 820, 22], [140, 1750, 22],
        ]}
        stars={[[50, 150, 15], [38, 1580, 16]]}
        sparks={[[80, 700, 15], [120, 1345, 18], [50, 1900, 16]]}
        paths={[
          "M0 180L40 230L35 340L0 360M100 200L146 195M95 330C80 380 110 400 146 390M0 430L50 440L40 560L0 580",
          "M20 760L90 745L110 850L40 870zM35 780L80 770M40 800L85 790M0 960C60 940 90 990 60 1040C40 1080 0 1070 0 1060M80 1100C110 1080 140 1110 146 1150",
          "M0 1180C40 1150 90 1190 70 1250C50 1290 10 1280 0 1270M10 1430L60 1420L55 1460L90 1470L40 1530L45 1485L15 1480zM90 1620L146 1600",
          "M0 1740C20 1720 70 1740 75 1790L0 1800M20 1800L25 1840Q45 1850 60 1795M80 1850L146 1800M90 1880L146 1850M0 1960C40 1940 100 1990 90 2060C60 2090 20 2080 0 2060M60 2160L140 2150L146 2250M60 2160L80 2250",
        ]}
      />
    </WallpaperLayer>
  );
}

/* ---------- drawings ---------- */

function Avatar() {
  const dots = Array.from({ length: 22 }, (_, i) => {
    const a = (i / 22) * Math.PI * 2;
    return <circle key={i} cx={410 + Math.sin(a) * 100} cy={196 - Math.cos(a) * 100} r="4.5" fill="#ffe1d0" />;
  });
  return (
    <AvatarSvg width="105" height="105" viewBox="252 38 315 316">
      <defs>
        <path id="ring" d="M410 311A115 115 0 0 1 410 81A115 115 0 0 1 410 311" />
        <clipPath id="disc"><circle cx="410" cy="196" r="80" /></clipPath>
      </defs>
      <circle cx="410" cy="196" r="155" fill="#ed1c24" stroke="#44282c" strokeWidth="4" />
      {dots}
      <circle cx="410" cy="196" r="84" fill="#ed1c24" stroke="#fbe3e0" strokeWidth="5" />
      <g clipPath="url(#disc)">
        {Array.from({ length: 11 }, (_, i) => (
          <rect key={i} x="325" y={118 + i * 12} width="170" height="7.500" fill="#fbdcdc" />
        ))}
        <path d="M376 245C362 200 368 165 410 160C452 165 458 200 446 245z" fill="#c65b62" />
      </g>
      <path d="M360 250H460L470 285H355z" fill="#f7dfe0" />
      <path d="M352 168C366 138 392 124 412 128C420 134 418 142 412 146C392 144 382 160 375 185L378 215L365 285L322 280C345 255 346 200 352 168z" fill="#fbeaea" />
      <path d="M368 205L340 272M372 160C366 185 366 200 362 215" stroke="#d3505a" strokeWidth="3" fill="none" />
      <circle cx="410" cy="159" r="8" fill="#d9a8a0" stroke="#fff" strokeWidth="3" />
      <circle cx="410" cy="196" r="29" fill="#e8a4aa" stroke="#fff3f3" strokeWidth="4" />
      <circle cx="410" cy="196" r="21" fill="#fff" />
      <path d="M374 250H452M378 262H452M382 250V285M396 250V285M410 250V285M425 250V285M440 250V285" stroke="#c95a61" strokeWidth="2.500" />
      <circle cx="368" cy="78" r="6" fill="#fff" />
      <text fill="#fff" stroke="#fff" strokeWidth="1" fontFamily="Roboto, sans-serif" fontWeight="800" fontSize="33">
        <textPath href="#ring" startOffset="349" textLength="272" lengthAdjust="spacingAndGlyphs">INDIAN RAILWAYS</textPath>
      </text>
      <text fill="#fff" stroke="#fff" strokeWidth="1" fontFamily='"Noto Sans Devanagari", "Noto Sans", sans-serif' fontWeight="700" fontSize="37">
        <textPath href="#ring" startOffset="138">भारतीय रेल</textPath>
      </text>
    </AvatarSvg>
  );
}

function StatusIcons() {
  return (
    <>
      <StatusGlyph $left={7} width="34" height="34" viewBox="0 0 34 34" fill="none" stroke="#e4ecea" strokeWidth="3">
        <circle cx="17" cy="19" r="13.2" />
        <path d="M2 8.5Q4 4 9.5 2M32 8.5Q30 4 24.5 2" strokeWidth="3.4" />
        <path d="M11.5 17L17 22L23 16.5" strokeWidth="2.8" />
      </StatusGlyph>
      <StatusGlyph $left={13} width="40" height="28" viewBox="0 0 40 28" fill="#e4ecea">
        <path d="M0 27.5V25.500L8 20V27.500zM11 27.500V18L15.500 15V27.500zM18.500 27.500V14L23.300 10.500V27.500zM26.500 27.500V8.500L31 5.500V27.500zM34 27.500V3.500L39 0V27.500z" />
      </StatusGlyph>
      <StatusText $left={5} $spacing={-1}>4G</StatusText>
      <StatusGlyph $left={2.5} width="12" height="14" viewBox="0 -3 12 14" fill="none" stroke="#5d8780" strokeWidth="2" overflow="visible">
        <path d="M4 1V12L1 8.500M8 13V2L11 5.500" />
      </StatusGlyph>
    </>
  );
}

export default function App() {
  return (
    <Screen>
      <GlobalStyle />
      <Wallpaper />
      <StatusBar>
        <StatusText>6:15 PM</StatusText>
        <StatusRight>
          <StatusText $spacing={-1.1}>1.7KB/s</StatusText>
          <StatusIcons />
          <Battery>
            <BatteryLevel />
            41
          </Battery>
        </StatusRight>
      </StatusBar>
      <AppBar>
        <svg width="48" height="50" viewBox="0 0 48 50" fill="none" stroke="#fff" strokeWidth="6">
          <path d="M26 2.500L4 25L26 47.500M4 25H48" />
        </svg>
        <Avatar />
        <ContactName>Aman Mittal Sir</ContactName>
        <svg width="63" height="38" viewBox="0 0 63 38" fill="#fff">
          <rect width="44" height="38" rx="4" />
          <path d="M47 14Q47 11.500 49 10L58 4.500Q62 2.500 62 6V32Q62 35.500 58 33.500L49 27.500Q47 26 47 24z" />
        </svg>
        <CallIcon size={72} />
        <DotsIcon width="12" height="48" viewBox="0 0 12 48" fill="#fff">
          <circle cx="6" cy="6" r="6" />
          <circle cx="6" cy="24" r="6" />
          <circle cx="6" cy="42" r="6" />
        </DotsIcon>
      </AppBar>

      <Chat>
        <Bubble $top={-3} $height={966}>
          <CaptureWindow $w={753} $h={753} $r="8px">
            <AppCapture shift={-48} rows={7} />
          </CaptureWindow>
          <Caption>{"Here can you change the icon two\nsomething like two arrows going\nin opposite direction ?"}</Caption>
          <Stamp>7:59 pm</Stamp>
        </Bubble>

        <Bubble $mine $top={25} $height={335}>
          <Tail $mine width="40" height="36" viewBox="0 0 40 36" fill="#e2ffc8">
            <path d="M0 0H36Q42 1 39 7L19 35H0z" />
          </Tail>
          <Quote>
            <QuoteBar />
            <QuoteBody>
              <QuoteName>Aman Mittal Sir</QuoteName>
              <QuoteText>
                <InlineCamera width="36" height="31" viewBox="0 0 36 31">
                  <path d="M3 3L6 0H12L15 3H32Q35 3 35 6V28Q35 31 32 31H3Q0 31 0 28V6Q0 4 3 3z" fill="#93a98b" />
                  <circle cx="17.500" cy="17" r="7.500" fill="none" stroke="#e6fbd5" strokeWidth="2.600" />
                </InlineCamera>
                {"Here can you change the icon\ntwo something like two arrows\ngoing in opposite direction ?"}
              </QuoteText>
            </QuoteBody>
            <CaptureWindow $w={156} $h={237} $r="0 10px 10px 0">
              <AppCapture scale={0.2072} rows={10} />
            </CaptureWindow>
          </Quote>
          <ReplyRow>
            <ReplyText>Ok will do this tomorrow</ReplyText>
            <ReplyMeta>
              8:00 pm
              <svg width="46" height="30" viewBox="0 0 46 30" fill="none" stroke="#9bb38e" strokeWidth="4">
                <path d="M1.500 17L11.500 27L30 2M19 23L24 27L44 2" />
              </svg>
            </ReplyMeta>
          </ReplyRow>
        </Bubble>

        <DatePill>25 OCTOBER 2019</DatePill>

        <Bubble $top={38} $height={160}>
          <Tail width="33" height="38" viewBox="0 0 33 38" fill="#fff">
            <path d="M33 0H3Q-2 1 1 7L21 37H33z" />
          </Tail>
          <DarkPreview>Search using Train Name or Loco Number</DarkPreview>
        </Bubble>

        <RoundButton $x={853} $y={432} $size={96} $bg="rgba(90,75,65,.26)" aria-label="Forward">
          <svg width="60" height="46" viewBox="0 0 60 46" fill="#fff">
            <path d="M36 1Q36 -1 38 1L58 18Q60 20 58 22L39 39Q36 41 36 38V30C20 29 9 34 2 44Q-1 46 1 42C6 24 17 12 36 11z" />
          </svg>
        </RoundButton>
        <RoundButton $x={947} $y={1372} $size={98} $bg="rgba(251,250,249,.93)" $raised aria-label="Scroll to latest">
          <svg width="36" height="34" viewBox="0 0 36 34" fill="none" stroke="#8c9599" strokeWidth="4.400">
            <path d="M2 3L18 17.500L34 3M2 17L18 31L34 17" />
          </svg>
        </RoundButton>
      </Chat>

      <Composer>
        <MessageBox>
          <svg width="66" height="66" viewBox="0 0 66 66" fill="none" stroke="#868c93" strokeWidth="5">
            <circle cx="33" cy="33" r="29.500" />
            <ellipse cx="24.500" cy="26" rx="4" ry="5.500" fill="#868c93" stroke="none" />
            <ellipse cx="42" cy="26" rx="4" ry="5.500" fill="#868c93" stroke="none" />
            <path d="M16.500 36H50Q50 51 33 51Q16.500 51 16.500 36z" fill="#868c93" stroke="none" />
            <path d="M21 39Q33 41.500 45.500 39Q44 44.500 33 44.500Q22 44.500 21 39z" fill="#fff" stroke="none" />
          </svg>
          <Placeholder>Type a message</Placeholder>
          <svg width="64" height="58" viewBox="440 740 182 178" preserveAspectRatio="none" fill="none" stroke="#868c93" strokeWidth="15" strokeLinecap="round">
            <path d="M536 765L598 833C617 855 615 880 600 896C582 911 558 909 543 893L459 802C448 788 450 770 462 760C475 751 492 753 502 765L566 834C574 843 572 855 562 859C555 861 549 858 544 853L498 806" />
          </svg>
          <CameraGlyph width="60" height="58" viewBox="0 0 60 58">
            <rect width="60" height="58" rx="13" fill="#868c93" />
            <circle cx="30" cy="29" r="14" fill="none" stroke="#fff" strokeWidth="5" />
          </CameraGlyph>
        </MessageBox>
        <MicButton>
          <svg width="44" height="61" viewBox="0 0 44 61" fill="#fff">
            <rect x="13" width="18.500" height="36" rx="9.250" />
            <path d="M0 28H6.500C7 38 13 43.500 22 43.500C31 43.500 37 38 37.500 28H44C43.500 40 36 47.500 25 49V59Q25 61 22 61Q19 61 19 59V49C8 47.500 .5 40 0 28z" />
          </svg>
        </MicButton>
      </Composer>
    </Screen>
  );
}
